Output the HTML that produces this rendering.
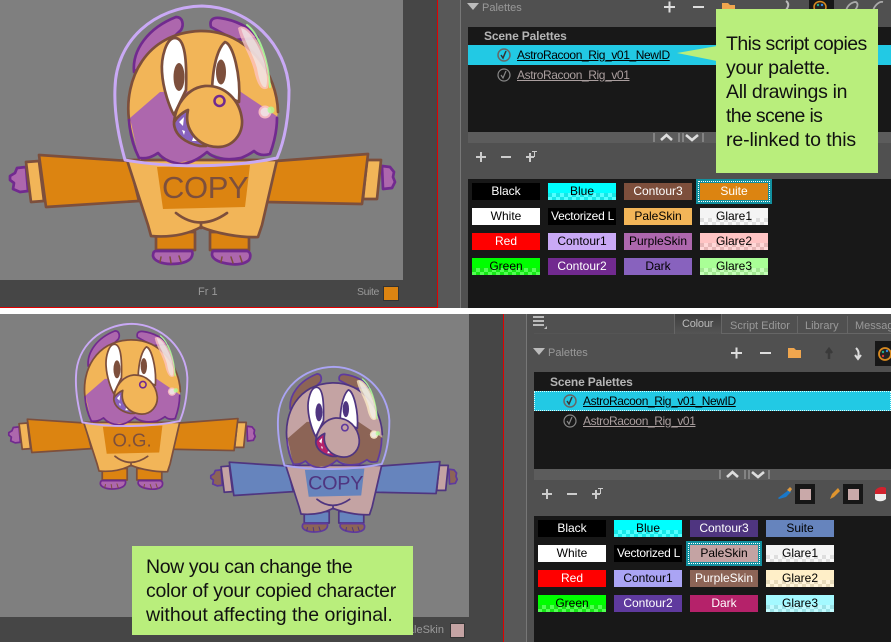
<!DOCTYPE html>
<html><head><meta charset="utf-8"><style>
html,body{margin:0;padding:0;background:#fff}
#r{position:relative;width:891px;height:642px;overflow:hidden;font-family:"Liberation Sans",sans-serif;background:#fff}
#r div,#r span{position:absolute;box-sizing:border-box}
.t,.sw{white-space:nowrap}
.t{line-height:16px;height:16px}
.sw{width:68px;height:17px;font-size:12px;line-height:17px;text-align:center;overflow:hidden}
.c::after{content:"";position:absolute;left:0;right:0;bottom:0;height:7px;background:repeating-conic-gradient(rgba(255,255,255,.32) 0 25%,rgba(120,120,120,.18) 0 50%) 0 0/8px 8px}
.sw b{position:relative;z-index:1;font-weight:normal}
.sel{width:76px;height:25px;background:#12909f}
.sel i{position:absolute;left:2px;top:2px;right:2px;bottom:2px;border:1px dotted #fff}
.co{background:#b9ee7c;color:#111}
.co .t{font-size:19.5px;line-height:24px;height:24px;letter-spacing:-.5px}
.nm{font-size:12px;letter-spacing:-.4px;text-decoration:underline}
.ph{font-size:12px;font-weight:bold;color:#b5b5b5;letter-spacing:-.15px}
svg{position:absolute;left:0;top:0;overflow:visible}
</style></head><body><div id="r">

<!-- top half -->
<div style="left:0;top:0;width:891px;height:308px;overflow:hidden;background:#505050">
<div style="left:0;top:0;width:403px;height:280px;background:#7f7f7f"></div>
<div style="left:0;top:280px;width:437px;height:27px;background:#464646"></div>
<div style="left:403px;top:0;width:34px;height:307px;background:#464646"></div>
<div style="left:0;top:307px;width:438px;height:1px;background:#e00000"></div>
<div style="left:437px;top:0;width:1px;height:308px;background:#e00000"></div>
<div style="left:438px;top:0;width:22px;height:308px;background:#585858"></div>
<div style="left:460px;top:0;width:1px;height:308px;background:#777"></div>
<div class="t" style="left:198px;top:284px;font-size:11px;color:#9a9a9a">Fr 1</div>
<div class="t" style="left:357px;top:284px;font-size:10.5px;letter-spacing:-.4px;color:#9a9a9a">Suite</div>
<div style="left:383px;top:286px;width:16px;height:15px;background:#dc8411;border:1px solid #333"></div>

<svg width="891" height="308" style="left:468px;top:0"><g fill="#ddd">
<rect x="196" y="6" width="11" height="2"/><rect x="200.500" y="1.500" width="2" height="11"/><rect x="225" y="6" width="11" height="2"/></g>
<path d="M254 3h6l2 2h5v6h-13z" fill="#f0a64e"/><rect x="341" y="0" width="25" height="12" fill="#171717"/>
<ellipse cx="352" cy="7" rx="6" ry="5.500" fill="#222" stroke="#d88a20" stroke-width="1.500"/><circle cx="350" cy="5" r="1.200" fill="#2a8"/><circle cx="354" cy="5" r="1.200" fill="#38d"/>
<path d="M318 1c3 2 3 5 0 9" fill="none" stroke="#bbb" stroke-width="2"/>
<path d="M378 11c1-5 5-9 10-9 3 2 1 6-1 8M405 11c1-5 6-10 10-9" fill="none" stroke="#aaa" stroke-width="1.800"/></svg>
<div class="t" style="left:482px;top:0;font-size:11px;color:#999">Palettes</div>
<svg width="20" height="20" style="left:467px;top:3px"><path d="M0 0H12L6 7Z" fill="#bbb"/></svg>

<div style="left:468px;top:27px;width:423px;height:105px;background:#181818"></div>
<div class="t ph" style="left:484px;top:28px">Scene Palettes</div>
<div style="left:468px;top:45px;width:423px;height:20px;background:#22c9e4"></div>
<div class="t nm" style="left:517px;top:47px;color:#000">AstroRacoon_Rig_v01_NewID</div>
<div class="t nm" style="left:517px;top:67px;color:#ab9f9f">AstroRacoon_Rig_v01</div>
<svg width="20" height="60" style="left:494px;top:45px" fill="none">
<circle cx="10" cy="10" r="6" stroke="#666" stroke-width="1.500"/><path d="M7 10l2 3 3-7" stroke="#333" stroke-width="1.500"/>
<circle cx="10" cy="30" r="6" stroke="#888" stroke-width="1.200"/><path d="M7 30l2 3 3-7" stroke="#888" stroke-width="1.200"/></svg>
<div style="left:468px;top:132px;width:423px;height:11px;background:#5c5c5c"></div>
<svg width="60" height="11" style="left:653px;top:132px" fill="none" stroke="#ddd"><path d="M1 1v9M26 1v9M30 1v9M50 1v9" stroke="#aaa"/><path d="M8 8l5.500-5 5.500 5M33 3l6 5 6-5" stroke-width="2.600"/></svg>
<svg width="70" height="20" style="left:475px;top:148px" fill="#ccc"><rect x="1" y="8" width="10" height="2"/><rect x="5" y="4" width="2" height="10"/><rect x="26" y="8" width="10" height="2"/><rect x="51" y="8" width="8" height="2"/><rect x="54" y="5" width="2" height="9"/><rect x="57" y="3" width="5" height="1"/><rect x="59" y="3" width="1" height="6"/></svg>
<div style="left:468px;top:179px;width:423px;height:129px;background:#181818"></div>

<div class="sw" style="left:472px;top:183px;background:#000;color:#fff">Black</div>
<div class="sw c" style="left:548px;top:183px;background:#0ff;color:#000"><b>Blue</b></div>
<div class="sw" style="left:624px;top:183px;background:#7d4f3c;color:#fff">Contour3</div>
<div class="sel" style="left:696px;top:179px"><i></i></div>
<div class="sw" style="left:700px;top:183px;background:#dc8411;color:#fff">Suite</div>
<div class="sw" style="left:472px;top:208px;background:#fff;color:#000">White</div>
<div class="sw" style="left:548px;top:208px;background:#000;color:#fff;text-align:left;padding-left:3px;letter-spacing:-.25px">Vectorized L</div>
<div class="sw" style="left:624px;top:208px;background:#f2b558;color:#000">PaleSkin</div>
<div class="sw c" style="left:700px;top:208px;background:#f4f4f4;color:#000"><b>Glare1</b></div>
<div class="sw" style="left:472px;top:233px;background:#f00;color:#fff">Red</div>
<div class="sw" style="left:548px;top:233px;background:#c9a9f5;color:#000">Contour1</div>
<div class="sw" style="left:624px;top:233px;background:#ad67ad;color:#000">PurpleSkin</div>
<div class="sw c" style="left:700px;top:233px;background:#ffc4c4;color:#000"><b>Glare2</b></div>
<div class="sw c" style="left:472px;top:258px;background:#0f0;color:#000"><b>Green</b></div>
<div class="sw" style="left:548px;top:258px;background:#712a8f;color:#fff">Contour2</div>
<div class="sw" style="left:624px;top:258px;background:#8862be;color:#000">Dark</div>
<div class="sw c" style="left:700px;top:258px;background:#a9ff96;color:#000"><b>Glare3</b></div>
</div>

<!-- bottom half -->
<div style="left:0;top:314px;width:891px;height:328px;overflow:hidden;background:#505050">
<div style="left:0;top:0;width:469px;height:303px;background:#7f7f7f"></div>
<div style="left:0;top:303px;width:503px;height:25px;background:#464646"></div>
<div style="left:469px;top:0;width:34px;height:328px;background:#464646"></div>
<div style="left:503px;top:0;width:1px;height:328px;background:#e00000"></div>
<div style="left:504px;top:0;width:22px;height:328px;background:#585858"></div>
<div style="left:526px;top:0;width:1px;height:328px;background:#777"></div>
<div class="t" style="left:413px;top:308px;font-size:11px;color:#9a9a9a;width:31px;overflow:hidden;direction:rtl">PaleSkin</div>
<div style="left:450px;top:309px;width:15px;height:15px;background:#c4a3a3;border:1px solid #333"></div>

<svg width="20" height="20" style="left:533px;top:2px" fill="#bbb"><rect width="11" height="2"/><rect y="4" width="11" height="2"/><rect y="8" width="11" height="2"/><path d="M14 13v-3l-3 3z"/></svg>
<div style="left:674px;top:0;width:48px;height:20px;background:linear-gradient(#3e3e3e,#555);border-left:1px solid #666;border-right:1px solid #666"></div>
<div style="left:722px;top:19px;width:169px;height:1px;background:#666"></div>
<div style="left:534px;top:19px;width:140px;height:1px;background:#555"></div>
<div class="t" style="left:682px;top:2px;font-size:11px;letter-spacing:-.2px;color:#bbb">Colour</div>
<div class="t" style="left:730px;top:4px;font-size:11px;color:#999">Script Editor</div>
<div class="t" style="left:805px;top:4px;font-size:11px;color:#999">Library</div>
<div class="t" style="left:855px;top:4px;font-size:11px;color:#999">Messag</div>
<div style="left:797px;top:2px;width:1px;height:18px;background:#666"></div>
<div style="left:847px;top:2px;width:1px;height:18px;background:#666"></div>

<svg width="30" height="20" style="left:533px;top:34px"><path d="M0 0H12L6 7Z" fill="#bbb"/></svg>
<div class="t" style="left:548px;top:31px;font-size:11px;color:#999">Palettes</div>
<svg width="180" height="30" style="left:726px;top:25px"><g fill="#ddd"><rect x="5" y="13" width="11" height="2"/><rect x="9.500" y="8.500" width="2" height="11"/><rect x="34" y="13" width="11" height="2"/></g>
<path d="M62 9h6l2 2h5v8h-13z" fill="#f0a64e"/><path d="M103 20v-9m-3 3l3-4 3 4" fill="none" stroke="#3a3a3a" stroke-width="2.500"/><path d="M130 9c3 3 3 5 2 10m-3-3l3 4 3-4" fill="none" stroke="#ddd" stroke-width="2"/>
<rect x="149" y="2" width="20" height="25" fill="#171717"/><circle cx="159" cy="15" r="6" fill="#222" stroke="#d88a20" stroke-width="1.800"/><circle cx="157" cy="13" r="1.200" fill="#2a8"/><circle cx="161" cy="12" r="1.200" fill="#38d"/><circle cx="157" cy="17" r="1.200" fill="#d33"/></svg>

<div style="left:534px;top:58px;width:357px;height:97px;background:#181818"></div>
<div class="t ph" style="left:550px;top:60px">Scene Palettes</div>
<div style="left:534px;top:77px;width:357px;height:20px;background:#22c9e4;border:1px dotted #dff"></div>
<div class="t nm" style="left:583px;top:79px;color:#000">AstroRacoon_Rig_v01_NewID</div>
<div class="t nm" style="left:583px;top:99px;color:#ab9f9f">AstroRacoon_Rig_v01</div>
<svg width="20" height="60" style="left:560px;top:77px" fill="none">
<circle cx="10" cy="10" r="6" stroke="#666" stroke-width="1.500"/><path d="M7 10l2 3 3-7" stroke="#333" stroke-width="1.500"/>
<circle cx="10" cy="30" r="6" stroke="#888" stroke-width="1.200"/><path d="M7 30l2 3 3-7" stroke="#888" stroke-width="1.200"/></svg>
<div style="left:534px;top:155px;width:357px;height:11px;background:#5c5c5c"></div>
<svg width="60" height="11" style="left:719px;top:155px" fill="none" stroke="#ddd"><path d="M1 1v9M26 1v9M30 1v9M50 1v9" stroke="#aaa"/><path d="M8 8l5.500-5 5.500 5M33 3l6 5 6-5" stroke-width="2.600"/></svg>
<svg width="70" height="20" style="left:541px;top:171px" fill="#ccc"><rect x="1" y="8" width="10" height="2"/><rect x="5" y="4" width="2" height="10"/><rect x="26" y="8" width="10" height="2"/><rect x="51" y="8" width="8" height="2"/><rect x="54" y="5" width="2" height="9"/><rect x="57" y="3" width="5" height="1"/><rect x="59" y="3" width="1" height="6"/></svg>
<svg width="120" height="24" style="left:775px;top:169px">
<path d="M3 15l8-6 4-3 1 3-5 5-7 2z" fill="#1a78c8"/><path d="M12 7l3-3 2 2-2 3z" fill="#e09a40"/>
<rect x="20" y="1" width="20" height="20" fill="#171717"/><rect x="25" y="6" width="11" height="11" fill="#c9a9a9"/>
<path d="M55 16l2-5 6-6 2 3-6 6z" fill="#e0952e"/>
<rect x="68" y="1" width="20" height="20" fill="#171717"/><rect x="73" y="6" width="11" height="11" fill="#c9a9a9"/>
<path d="M100 8c2-4 8-5 11-3v6h-11z" fill="#d2222e"/><path d="M100 11h11v5c-3 3-9 3-11 0z" fill="#eee"/></svg>
<div style="left:534px;top:202px;width:357px;height:126px;background:#181818"></div>

<div class="sw" style="left:538px;top:206px;background:#000;color:#fff">Black</div>
<div class="sw c" style="left:614px;top:206px;background:#0ff;color:#000"><b>Blue</b></div>
<div class="sw" style="left:690px;top:206px;background:#4f3580;color:#fff">Contour3</div>
<div class="sw" style="left:766px;top:206px;background:#6684bd;color:#000">Suite</div>
<div class="sw" style="left:538px;top:231px;background:#fff;color:#000">White</div>
<div class="sw" style="left:614px;top:231px;background:#000;color:#fff;text-align:left;padding-left:3px;letter-spacing:-.25px">Vectorized L</div>
<div class="sel" style="left:686px;top:227px"><i></i></div>
<div class="sw" style="left:690px;top:231px;background:#c4a3a3;color:#000">PaleSkin</div>
<div class="sw c" style="left:766px;top:231px;background:#f4f4f4;color:#000"><b>Glare1</b></div>
<div class="sw" style="left:538px;top:256px;background:#f00;color:#fff">Red</div>
<div class="sw" style="left:614px;top:256px;background:#aaa4f4;color:#000">Contour1</div>
<div class="sw" style="left:690px;top:256px;background:#8c6456;color:#fff">PurpleSkin</div>
<div class="sw c" style="left:766px;top:256px;background:#ffefc8;color:#000"><b>Glare2</b></div>
<div class="sw c" style="left:538px;top:281px;background:#0f0;color:#000"><b>Green</b></div>
<div class="sw" style="left:614px;top:281px;background:#5f3a9e;color:#fff">Contour2</div>
<div class="sw" style="left:690px;top:281px;background:#b5226a;color:#fff">Dark</div>
<div class="sw c" style="left:766px;top:281px;background:#a4f9ff;color:#000"><b>Glare3</b></div>
</div>

<!-- characters -->
<svg width="891" height="642">
<defs>
<symbol id="ch" viewBox="0 0 420 300" width="420" height="300" overflow="visible">
<g stroke-linejoin="round" stroke-linecap="round">
<!-- hands -->
<path d="M26 167l-9 1-2 5-5 3 0 4 4 3-1 6 7 3 8-1z" style="fill:var(--pu);stroke:var(--c2)" stroke-width="2.700"/>
<path d="M382 166l8 1 4 5-1 5 2 5-3 6-9 1z" style="fill:var(--pu);stroke:var(--c2)" stroke-width="2.700"/>
<!-- cuffs -->
<path d="M26 162l13-1 5 40-13 1z" style="fill:var(--sk);stroke:var(--c3)" stroke-width="2.700"/>
<path d="M367 160l14 0-4 39-14 0z" style="fill:var(--sk);stroke:var(--c3)" stroke-width="2.700"/>
<!-- arms -->
<path d="M39 155l90 6 10 40-93 6z" style="fill:var(--su);stroke:var(--c3)" stroke-width="2.700"/>
<path d="M368 154l-92 7-10 41 96 2z" style="fill:var(--su);stroke:var(--c3)" stroke-width="2.700"/>
<!-- legs and feet -->
<rect x="156" y="232" width="39" height="18" style="fill:var(--su);stroke:var(--c3)" stroke-width="2.700"/>
<rect x="210" y="232" width="39" height="18" style="fill:var(--su);stroke:var(--c3)" stroke-width="2.700"/>
<path d="M156 251h35c2 0 2 4 0 7-4 5-12 6-20 6-9 0-17-3-18-8 0-3 1-5 3-5z" style="fill:var(--pu);stroke:var(--c2)" stroke-width="2.700"/>
<path d="M214 251h33c4 1 4 6 2 9-4 4-12 5-19 4-9-1-17-4-18-9 0-2 0-4 2-4z" style="fill:var(--pu);stroke:var(--c2)" stroke-width="2.700"/>
<path d="M161 257l-1 5M170 257l1 6M179 256l2 6M222 257l-1 5M231 257l2 6M240 256l2 6" style="stroke:var(--c3)" stroke-width="1.500" fill="none"/>
<!-- body -->
<path d="M127 160L148 225 151 236C175 238 190 233 201 227 215 233 240 238 258 237L262 225 277 160Z" style="fill:var(--sk);stroke:var(--c3)" stroke-width="2.700"/>
<path d="M157 167L250 165 245 207 163 209Z" style="fill:var(--su)"/>
<path d="M176 213Q200 232 227 213M201 224v4" fill="none" style="stroke:var(--c3)" stroke-width="2.700"/>
<!-- ears -->
<path d="M134 72C132 50 148 28 176 17 183 17 184 25 181 30L150 60Z" style="fill:var(--pu);stroke:var(--c2)" stroke-width="2.700"/>
<path d="M211 27C209 20 213 17 220 18 235 20 250 27 258 38L235 40Z" style="fill:var(--pu);stroke:var(--c2)" stroke-width="2.700"/>
<!-- head -->
<path d="M129 120C124 80 145 33 200 31 250 30 277 75 278 112L270 152 254 151 241 158 207 152 190 158 175 163 158 153 140 160Z" style="fill:var(--sk)"/>
<path d="M130 118L160 92 238 90 278 117 271 152 261 156 254 151 242 158 225 158 207 152 195 160 175 163 158 153 147 159 139 159Z" style="fill:var(--pu)"/>
<path d="M129 120C124 80 145 33 200 31 250 30 277 75 278 112" fill="none" style="stroke:var(--c3)" stroke-width="2.700"/>
<path d="M129 120C130 135 134 148 139 158 147 159 152 157 158 153 163 159 170 163 182 164 192 163 200 158 207 152 213 158 225 161 241 158 246 156 250 154 254 151 258 155 263 156 270 154 274 143 277 132 277 118" fill="none" style="stroke:var(--c2)" stroke-width="2.700"/>
<!-- eyes -->
<path d="M175 38C166 38 161 58 162 72 163 90 170 108 174 115L186 90C187 60 185 38 175 38Z" fill="#fff" style="stroke:var(--c3)" stroke-width="2.700"/>
<ellipse cx="179" cy="77" rx="5.500" ry="14" style="fill:var(--pup)"/>
<path d="M225 42C219 47 213 62 212 90L239 102C241 75 233 44 225 42Z" fill="#fff" style="stroke:var(--c3)" stroke-width="2.700"/>
<ellipse cx="221" cy="72" rx="5" ry="12.500" style="fill:var(--pup)"/>
<!-- mouth -->
<path d="M188 109C180 112 174 118 174 124 175 135 185 143 200 146L206 146Z" style="fill:var(--dk);stroke:var(--c3)" stroke-width="2.700"/>
<path d="M179 122l5-5-1 9zM182 130l3 1-1 4zM192 141l2-6 3 6z" fill="#fff"/>
<!-- snout -->
<path d="M174 122C175 112 178 107 180 103 187 92 195 87 205 86 225 85 240 100 242 120 243 135 232 147 218 147 205 147 195 140 190 130 186 122 187 115 188 110 183 112 177 117 174 122Z" style="fill:var(--sk);stroke:var(--c3)" stroke-width="2.700"/>
<circle cx="219.500" cy="101" r="5" style="fill:var(--sk);stroke:var(--c2)" stroke-width="2.500"/>
<!-- glare -->
<path d="M247 25C260 35 268 60 270 87" fill="none" stroke="#a9ff96" stroke-width="2" opacity=".9"/>
<path d="M238 28C245 22 255 35 262 50 268 65 270 80 268 88 262 92 257 85 254 70 250 55 240 40 238 28Z" style="fill:var(--gl2)" opacity=".75"/>
<path d="M241 28C250 30 258 45 263 58 267 70 268 82 266 87 262 89 259 80 257 68 252 52 244 40 241 28Z" fill="#eee" opacity=".65"/>
<circle cx="265" cy="112" r="6.500" style="fill:var(--gl2)" opacity=".85"/><circle cx="265" cy="112" r="4.500" fill="#eee" opacity=".7"/><circle cx="271" cy="110" r="3.500" fill="#a9ff96" opacity=".75"/>
<!-- dome -->
<path d="M125 160C118 135 114 110 115 88 116 40 155 7 202 6 250 7 287 45 289 90 289 115 285 140 277 158 230 168 170 168 125 160Z" fill="none" style="stroke:var(--c1)" stroke-width="3"/>
</g>
</symbol>
</defs>
<g style="--sk:#f2b558;--pu:#ad67ad;--su:#dc8411;--c1:#c9a9f5;--c2:#712a8f;--c3:#7d4f3c;--dk:#8862be;--pup:#7d4f3c;--gl2:#ffc4c4">
<use href="#ch"/>
<text x="162" y="198" font-family="Liberation Sans" font-size="31" letter-spacing="-.4" fill="#7d4f3c">COPY</text>
</g>
<g transform="translate(2.400 320) scale(.64)" style="--sk:#f2b558;--pu:#ad67ad;--su:#dc8411;--c1:#c9a9f5;--c2:#712a8f;--c3:#7d4f3c;--dk:#8862be;--pup:#7d4f3c;--gl2:#ffc4c4">
<use href="#ch"/>
<text x="172" y="198" font-family="Liberation Sans" font-size="29" fill="#7d4f3c">O.G.</text>
</g>
<g transform="translate(204.400 363) scale(.64)" style="--sk:#c4a3a3;--pu:#8c6456;--su:#6684bd;--c1:#aaa4f4;--c2:#5f3a9e;--c3:#4f3580;--dk:#b5226a;--pup:#4f3580;--gl2:#ffefc8">
<use href="#ch"/>
<text x="162" y="198" font-family="Liberation Sans" font-size="31" letter-spacing="-.4" fill="#4f3580">COPY</text>
</g>
</svg>

<!-- callouts -->
<svg width="891" height="642"><path d="M717 46L677 53 717 61Z" fill="#b9ee7c"/></svg>
<div class="co" style="left:716px;top:9px;width:162px;height:164px">
<div class="t" style="left:10px;top:23px;letter-spacing:-.55px">This script copies</div>
<div class="t" style="left:10px;top:47px;letter-spacing:-.25px">your palette.</div>
<div class="t" style="left:10px;top:71px;letter-spacing:-.3px">All drawings in</div>
<div class="t" style="left:10px;top:95px;letter-spacing:-.65px">the scene is</div>
<div class="t" style="left:10px;top:119px;letter-spacing:-.13px">re-linked to this</div>
</div>
<div class="co" style="left:132px;top:546px;width:281px;height:89px">
<div class="t" style="left:14px;top:9px;letter-spacing:-.38px">Now you can change the</div>
<div class="t" style="left:14px;top:33px;letter-spacing:-.23px">color of your copied character</div>
<div class="t" style="left:14px;top:57px;letter-spacing:0">without affecting the original.</div>
</div>
</div></body></html>
